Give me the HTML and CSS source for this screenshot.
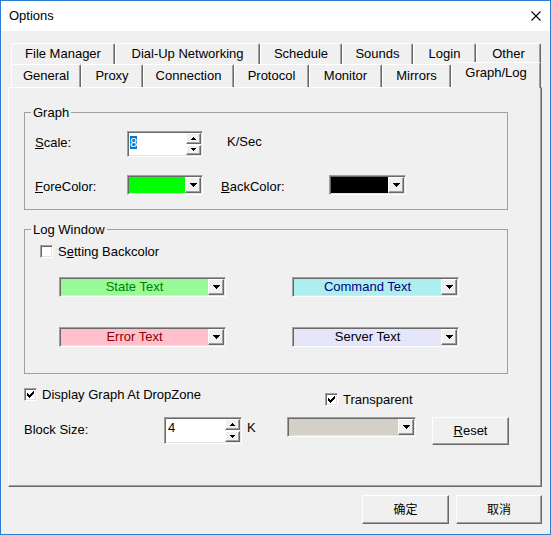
FILE: index.html
```
<!DOCTYPE html>
<html>
<head>
<meta charset="utf-8">
<link rel="stylesheet" href="styles.css">
</head>
<body>
<div class="window">
  <div class="titlebar">
    <span class="title">Options</span>
    <svg class="close" width="10" height="10" viewBox="0 0 10 10"><path d="M0.5 0.5L9.5 9.5M9.5 0.5L0.5 9.5" stroke="#000" stroke-width="1.1" fill="none"/></svg>
  </div>
  <div class="body">
    <div class="tabstrip">
      <div class="tabrow row1">
        <div class="tab t-fm">File Manager</div>
        <div class="tab t-dial">Dial-Up Networking</div>
        <div class="tab t-sched">Schedule</div>
        <div class="tab t-sounds">Sounds</div>
        <div class="tab t-login">Login</div>
        <div class="tab t-other">Other</div>
      </div>
      <div class="tabrow row2">
        <div class="tab t-gen">General</div>
        <div class="tab t-proxy">Proxy</div>
        <div class="tab t-conn">Connection</div>
        <div class="tab t-proto">Protocol</div>
        <div class="tab t-mon">Monitor</div>
        <div class="tab t-mir">Mirrors</div>
        <div class="tab t-graph active">Graph/Log</div>
      </div>
    </div>
    <div class="panel">
      <div class="group graph">
        <div class="group-label">Graph</div>
        <div class="row r-scale">
          <span class="lbl lbl-scale"><u>S</u>cale:</span>
          <div class="spin spin-scale sunken">
            <div class="spin-text st-scale"><span class="sel">8</span></div>
            <div class="spin-btns">
              <div class="sb raised"><svg width="5" height="3" viewBox="0 0 5 3" shape-rendering="crispEdges"><path d="M2 0h1v1h1v1h1v1h-5v-1h1v-1h1z" fill="#000"/></svg></div>
              <div class="sb raised"><svg width="5" height="3" viewBox="0 0 5 3" shape-rendering="crispEdges"><path d="M0 0h5v1h-1v1h-1v1h-1v-1h-1v-1h-1z" fill="#000"/></svg></div>
            </div>
          </div>
          <span class="lbl unit">K/Sec</span>
        </div>
        <div class="row r-color">
          <span class="lbl lbl-fore"><u>F</u>oreColor:</span>
          <div class="combo combo-fore sunken">
            <div class="field f-lime"></div>
            <div class="dd raised"><svg width="7" height="4" viewBox="0 0 7 4" shape-rendering="crispEdges"><path d="M0 0h7v1h-1v1h-1v1h-1v1h-1v-1h-1v-1h-1v-1h-1z" fill="#000"/></svg></div>
          </div>
          <span class="lbl lbl-back"><u>B</u>ackColor:</span>
          <div class="combo combo-back sunken">
            <div class="field f-black"></div>
            <div class="dd raised"><svg width="7" height="4" viewBox="0 0 7 4" shape-rendering="crispEdges"><path d="M0 0h7v1h-1v1h-1v1h-1v1h-1v-1h-1v-1h-1v-1h-1z" fill="#000"/></svg></div>
          </div>
        </div>
      </div>

      <div class="group log">
        <div class="group-label">Log Window</div>
        <div class="check-row">
          <span class="cb"></span>
          <span class="lbl">S<u>e</u>tting Backcolor</span>
        </div>
        <div class="color-grid">
          <div class="combo tcombo sunken">
            <div class="field f-state">State Text</div>
            <div class="dd raised"><svg width="7" height="4" viewBox="0 0 7 4" shape-rendering="crispEdges"><path d="M0 0h7v1h-1v1h-1v1h-1v1h-1v-1h-1v-1h-1v-1h-1z" fill="#000"/></svg></div>
          </div>
          <div class="combo tcombo sunken">
            <div class="field f-cmd">Command Text</div>
            <div class="dd raised"><svg width="7" height="4" viewBox="0 0 7 4" shape-rendering="crispEdges"><path d="M0 0h7v1h-1v1h-1v1h-1v1h-1v-1h-1v-1h-1v-1h-1z" fill="#000"/></svg></div>
          </div>
          <div class="combo tcombo sunken">
            <div class="field f-err">Error Text</div>
            <div class="dd raised"><svg width="7" height="4" viewBox="0 0 7 4" shape-rendering="crispEdges"><path d="M0 0h7v1h-1v1h-1v1h-1v1h-1v-1h-1v-1h-1v-1h-1z" fill="#000"/></svg></div>
          </div>
          <div class="combo tcombo sunken">
            <div class="field f-srv">Server Text</div>
            <div class="dd raised"><svg width="7" height="4" viewBox="0 0 7 4" shape-rendering="crispEdges"><path d="M0 0h7v1h-1v1h-1v1h-1v1h-1v-1h-1v-1h-1v-1h-1z" fill="#000"/></svg></div>
          </div>
        </div>
      </div>

      <div class="opts">
        <div class="opt opt-display">
          <span class="cb"><svg width="7" height="7" viewBox="0 0 7 7" shape-rendering="crispEdges"><path d="M0 2v3h1v1h1v1h1v-1h1v-1h1v-1h1v-1h1v-3h-1v1h-1v1h-1v1h-1v1h-1v-1h-1v-1h-1z" fill="#000"/></svg></span>
          <span class="lbl">Display Graph At DropZone</span>
        </div>
        <div class="opt opt-trans">
          <span class="cb"><svg width="7" height="7" viewBox="0 0 7 7" shape-rendering="crispEdges"><path d="M0 2v3h1v1h1v1h1v-1h1v-1h1v-1h1v-1h1v-3h-1v1h-1v1h-1v1h-1v1h-1v-1h-1v-1h-1z" fill="#000"/></svg></span>
          <span class="lbl">Transparent</span>
        </div>
      </div>

      <div class="blockrow">
        <span class="lbl lbl-block">Block Size:</span>
        <div class="spin spin-block sunken">
          <div class="spin-text st-block">4</div>
          <div class="spin-btns">
            <div class="sb raised"><svg width="5" height="3" viewBox="0 0 5 3" shape-rendering="crispEdges"><path d="M2 0h1v1h1v1h1v1h-5v-1h1v-1h1z" fill="#000"/></svg></div>
            <div class="sb raised"><svg width="5" height="3" viewBox="0 0 5 3" shape-rendering="crispEdges"><path d="M0 0h5v1h-1v1h-1v1h-1v-1h-1v-1h-1z" fill="#000"/></svg></div>
          </div>
        </div>
        <span class="lbl unit-k">K</span>
        <div class="combo combo-gray sunken">
          <div class="field f-gray"></div>
          <div class="dd raised"><svg width="7" height="4" viewBox="0 0 7 4" shape-rendering="crispEdges"><path d="M0 0h7v1h-1v1h-1v1h-1v1h-1v-1h-1v-1h-1v-1h-1z" fill="#000"/></svg></div>
        </div>
        <div class="btn btn-reset raised"><u>R</u>eset</div>
      </div>
    </div>
  </div>
  <div class="footer">
    <div class="btn btn-ok raised cjk">确定</div>
    <div class="btn btn-cancel raised cjk">取消</div>
  </div>
</div>
</body>
</html>
```
FILE: styles.css
```
* { box-sizing: border-box; }
body {
  margin: 0;
  font-family: "Liberation Sans", Arial, "Noto Sans CJK SC", sans-serif;
  font-size: 13px;
  color: #000;
}
.window {
  width: 551px;
  height: 535px;
  border: 1px solid #2b7cd3;
  background: #f0f0f0;
  display: flex;
  flex-direction: column;
}
.titlebar {
  height: 30px;
  background: #fff;
  display: flex;
  align-items: center;
  justify-content: space-between;
  padding: 0 9px 0 8px;
  flex: none;
}
.title { line-height: 16px; }
.close { display: block; }

.body { padding: 12px 7px 0 7px; flex: none; }
.tabstrip { margin-left: 3px; width: 530px; }
.tabrow { display: flex; }
.row1 { height: 21px; }
.row2 { height: 23px; }
.tab {
  background: #f0f0f0;
  border-top: 1px solid #fff;
  border-left: 1px solid #fff;
  border-right: 1px solid #696969;
  box-shadow: inset -1px 0 #a0a0a0;
  border-radius: 2px 2px 0 0;
  text-align: center;
  white-space: nowrap;
  flex: none;
}
.row1 .tab { height: 21px; line-height: 19px; }
.row2 .tab { height: 23px; line-height: 21px; }
.row2 .tab.active {
  height: 26px;
  margin-top: -2px;
  line-height: 20px;
  position: relative;
  z-index: 1;
}
.t-fm { width: 104px; }
.t-dial { width: 145px; }
.t-sched { width: 82px; }
.t-sounds { width: 71px; }
.t-login { width: 63px; }
.t-other { width: 65px; }
.t-gen { width: 70px; }
.t-proxy { width: 62px; }
.t-conn { width: 91px; }
.t-proto { width: 75px; }
.t-mon { width: 73px; }
.t-mir { width: 69px; }
.t-graph { width: 90px; }

.panel {
  width: 534px;
  height: 400px;
  border-top: 1px solid #fff;
  border-left: 1px solid #fff;
  border-right: 1px solid #696969;
  border-bottom: 1px solid #696969;
  box-shadow: inset -1px -1px #a0a0a0;
  padding: 0 0 0 15px;
}

.sunken {
  border-top: 1px solid #a0a0a0;
  border-left: 1px solid #a0a0a0;
  border-right: 1px solid #fff;
  border-bottom: 1px solid #fff;
  box-shadow: inset 1px 1px #696969, inset -1px -1px #e3e3e3;
  padding: 1px;
}
.raised {
  background: #f0f0f0;
  border-top: 1px solid #fff;
  border-left: 1px solid #fff;
  border-right: 1px solid #696969;
  border-bottom: 1px solid #696969;
  box-shadow: inset -1px -1px #a0a0a0;
}

.group {
  width: 484px;
  border: 1px solid #a0a0a0;
}
.group-label {
  margin-top: -8px;
  padding: 0 2px;
  background: #f0f0f0;
  width: max-content;
  line-height: 16px;
}
.graph .group-label { margin-left: -4px; }
.log .group-label { margin-left: -9px; }
.graph { margin-top: 24px; padding: 0 0 14px 10px; }
.row { display: flex; align-items: flex-start; }
.lbl { line-height: 16px; white-space: nowrap; }
.r-scale { margin-top: 10px; height: 26px; }
.lbl-scale { width: 92px; padding-top: 4px; }
.unit { margin-left: 24px; padding-top: 3px; }
.r-color { margin-top: 18px; height: 20px; }
.lbl-fore { width: 92px; padding-top: 4px; }
.lbl-back { margin-left: 18px; width: 108px; padding-top: 4px; }

.spin { display: flex; background: #fff; }
.spin-scale { width: 76px; height: 26px; }
.spin-block { width: 78px; height: 27px; }
.spin-text { flex: 1; }
.st-scale { padding: 2px 0 0 1px; }
.sel {
  display: inline-block;
  background: #0078d7;
  color: #fff;
  height: 13px;
  line-height: 13px;
}
.st-block { padding: 1px 0 0 2px; line-height: 16px; }
.spin-btns { width: 15px; display: flex; flex-direction: column; gap: 1px; }
.sb { flex: 1; display: flex; align-items: center; justify-content: center; }
.sb svg, .dd svg, .cb svg { display: block; }

.combo { display: flex; height: 20px; }
.combo-fore { width: 76px; }
.combo-back { width: 77px; }
.combo-gray { width: 129px; }
.field { flex: 1; text-align: center; line-height: 16px; white-space: nowrap; }
.dd { width: 16px; display: flex; align-items: center; justify-content: center; flex: none; }
.f-lime { background: #00ff00; }
.f-black { background: #000; }
.f-gray { background: #d4d0c8; }
.f-state { background: #98fb98; color: #008000; }
.f-err { background: #ffc0cb; color: #8b0000; }
.f-cmd { background: #afeeee; color: #000080; }
.f-srv { background: #e6e6fa; color: #000; }

.log { margin-top: 19px; padding: 0 0 26px 15px; }
.check-row { margin-top: 6px; height: 15px; display: flex; align-items: center; gap: 5px; }
.cb {
  width: 13px;
  height: 13px;
  background: #fff;
  border-top: 1px solid #a0a0a0;
  border-left: 1px solid #a0a0a0;
  border-right: 1px solid #fff;
  border-bottom: 1px solid #fff;
  box-shadow: inset 1px 1px #696969, inset -1px -1px #e3e3e3;
  display: flex;
  align-items: center;
  justify-content: center;
  flex: none;
}
.color-grid {
  margin: 18px 0 0 19px;
  display: grid;
  grid-template-columns: 167px 167px;
  column-gap: 66px;
  row-gap: 30px;
}
.tcombo { width: 167px; }

.opts { margin-top: 13px; height: 20px; display: flex; align-items: flex-start; }
.opt { height: 15px; display: flex; align-items: center; gap: 5px; }
.opt-display { width: 301px; }
.opt-trans { margin-top: 5px; }

.blockrow { margin-top: 10px; display: flex; align-items: flex-start; }
.lbl-block { width: 140px; padding-top: 5px; }
.unit-k { margin-left: 5px; width: 40px; padding-top: 3px; }
.btn {
  display: flex;
  align-items: center;
  justify-content: center;
  line-height: 16px;
}
.btn-reset { margin-left: 16px; width: 77px; height: 28px; }

.footer {
  display: flex;
  justify-content: flex-end;
  gap: 7px;
  padding: 8px 8px 0 0;
}
.btn-ok { width: 87px; height: 29px; }
.btn-cancel { width: 86px; height: 29px; }
.cjk { font-family: "Noto Sans CJK SC", sans-serif; font-size: 12px; padding-bottom: 2px; }
```
